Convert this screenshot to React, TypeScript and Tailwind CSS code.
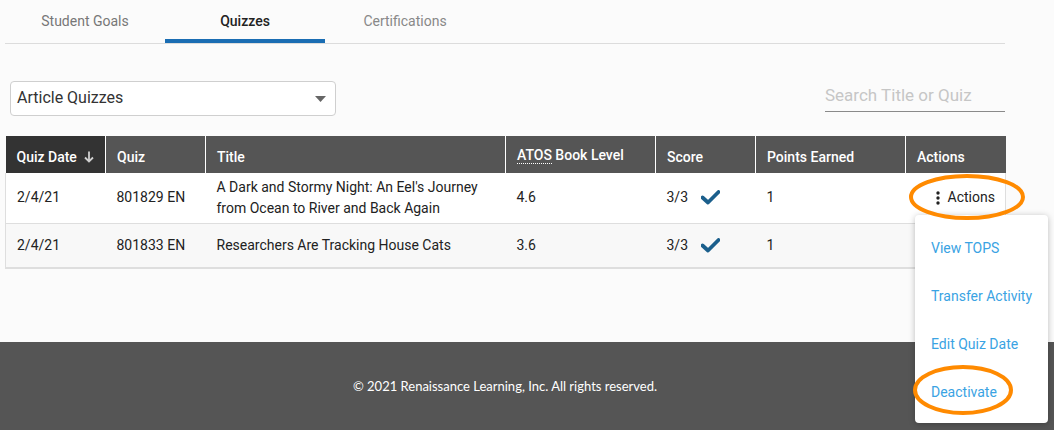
import React from "react";

const rows = [
  {
    date: "2/4/21",
    quiz: "801829 EN",
    title: "A Dark and Stormy Night: An Eel's Journey from Ocean to River and Back Again",
    level: "4.6",
    score: "3/3",
    points: "1",
  },
  {
    date: "2/4/21",
    quiz: "801833 EN",
    title: "Researchers Are Tracking House Cats",
    level: "3.6",
    score: "3/3",
    points: "1",
  },
];

function Check() {
  return (
    <svg width="19" height="15" viewBox="0 0 19 15" className="inline-block">
      <path d="M1.5 7.5 L7 12.5 L17.5 2" fill="none" stroke="#1b5f8c" strokeWidth="3.8" strokeLinecap="round" strokeLinejoin="round" />
    </svg>
  );
}

export default function App() {
  return (
    <div className="relative w-[1054px] h-[430px] overflow-hidden bg-[#fbfbfb] font-['Roboto',sans-serif] text-[#222]">
      {/* tabs */}
      <div className="ml-[5px] w-[1000px] h-[44px] flex border-b border-[#dcdcdc]">
        <div className="w-[160px] h-full flex items-center justify-center text-[14px] text-[#777]">Student Goals</div>
        <div className="w-[160px] h-full flex items-center justify-center text-[14px] font-medium text-[#222] border-b-[4px] border-[#1a6db3] pt-[4px]">
          Quizzes
        </div>
        <div className="w-[160px] h-full flex items-center justify-center text-[14px] text-[#888]">Certifications</div>
      </div>

      {/* filters */}
      <div className="ml-[5px] w-[1000px] flex items-end justify-between mt-[37px]">
        <div className="ml-[5px] w-[326px] h-[35px] bg-white border border-[#cfcfcf] rounded-[4px] flex items-center justify-between pl-[6px] pr-[9px]">
          <span className="text-[16px] text-[#333] -mt-[1px]">Article Quizzes</span>
          <svg width="11" height="6" viewBox="0 0 11 6">
            <path d="M0 0 H11 L5.5 6 Z" fill="#666" />
          </svg>
        </div>
        <div className="w-[180px] h-[32px] border-b border-[#8a8a8a] mb-[4px] flex items-center text-[17px] text-[#c6c6c6] -mt-[1px]">
          Search Title or Quiz
        </div>
      </div>

      {/* table */}
      <div className="ml-[5px] mt-[20px] w-[1000px]">
        <table className="w-full table-fixed border-collapse text-[14px]">
          <colgroup>
            <col className="w-[100px]" />
            <col className="w-[100px]" />
            <col className="w-[300px]" />
            <col className="w-[150px]" />
            <col className="w-[100px]" />
            <col className="w-[150px]" />
            <col className="w-[100px]" />
          </colgroup>
          <thead>
            <tr className="h-[37px] text-white text-left">
              <th className="bg-[#333] font-medium pl-[11px] pt-[5px] border-r border-white">
                <div className="flex items-center gap-[7px]">
                  <span>Quiz Date</span>
                  <svg width="10" height="12" viewBox="0 0 10 12">
                    <path d="M5 0.5 V10 M1 6.5 L5 10.5 L9 6.5" fill="none" stroke="#d0d0d0" strokeWidth="1.8" />
                  </svg>
                </div>
              </th>
              <th className="bg-[#555] font-medium pl-[11px] pt-[5px] border-r border-white">Quiz</th>
              <th className="bg-[#555] font-medium pl-[11px] pt-[5px] border-r border-white">Title</th>
              <th className="bg-[#555] font-medium pl-[11px] pt-[2px] border-r border-white">
                <span className="border-b border-dotted border-white">ATOS</span> Book Level
              </th>
              <th className="bg-[#555] font-medium pl-[11px] pt-[5px] border-r border-white">Score</th>
              <th className="bg-[#555] font-medium pl-[11px] pt-[5px] border-r border-white">Points Earned</th>
              <th className="bg-[#555] font-medium pl-[11px] pt-[5px]">Actions</th>
            </tr>
          </thead>
          <tbody>
            {rows.map((r, i) => (
              <tr
                key={r.quiz}
                className={`${i === 0 ? "h-[50px] bg-white border-b border-[#dedede]" : "h-[45px] bg-[#f8f8f8] border-b-2 border-[#dcdcdc]"} border-x border-[#dedede] text-[#222]`}
              >
                <td className="pl-[11px]">{r.date}</td>
                <td className="pl-[11px]">{r.quiz}</td>
                <td className="pl-[11px] pr-[10px] leading-[21px]">{r.title}</td>
                <td className="pl-[11px]">{r.level}</td>
                <td className="pl-[11px]">
                  <div className="flex items-center gap-[13px]">
                    <span>{r.score}</span>
                    <Check />
                  </div>
                </td>
                <td className="pl-[11px]">{r.points}</td>
                <td className="pl-[30px]">
                  {i === 0 && (
                    <div className="flex items-center gap-[8px]">
                      <svg width="4" height="14" viewBox="0 0 4 14">
                        <circle cx="2" cy="2" r="1.7" fill="#222" />
                        <circle cx="2" cy="7" r="1.7" fill="#222" />
                        <circle cx="2" cy="12" r="1.7" fill="#222" />
                      </svg>
                      <span>Actions</span>
                    </div>
                  )}
                </td>
              </tr>
            ))}
          </tbody>
        </table>
      </div>

      {/* footer */}
      <div className="absolute left-0 right-0 top-[342px] h-[88px] bg-[#555] flex items-center justify-center">
        <span className="text-white text-[13px] font-['Lato',sans-serif] mr-[44px] mt-[2px]">
          © 2021 Renaissance Learning, Inc. All rights reserved.
        </span>
      </div>

      {/* actions menu */}
      <div className="absolute left-[915px] top-[215px] w-[133px] h-[208px] bg-white rounded-[4px] shadow-[0_1px_6px_rgba(0,0,0,0.25)] flex flex-col pt-[22px] text-[14px] text-[#3aa3e3]">
        <div className="shrink-0 h-[48px] pl-[16px] pt-[1px]">View TOPS</div>
        <div className="shrink-0 h-[48px] pl-[16px] pt-[1px]">Transfer Activity</div>
        <div className="shrink-0 h-[48px] pl-[16px] pt-[1px]">Edit Quiz Date</div>
        <div className="shrink-0 h-[40px] pl-[16px] pt-[1px]">Deactivate</div>
      </div>

      {/* callout ellipses */}
      <svg className="absolute left-0 top-0 pointer-events-none" width="1054" height="430">
        <ellipse cx="967" cy="197" rx="56" ry="21" fill="none" stroke="#ff8a00" strokeWidth="4" />
        <ellipse cx="963" cy="390" rx="48" ry="23" fill="none" stroke="#ff8a00" strokeWidth="4" />
      </svg>
    </div>
  );
}
